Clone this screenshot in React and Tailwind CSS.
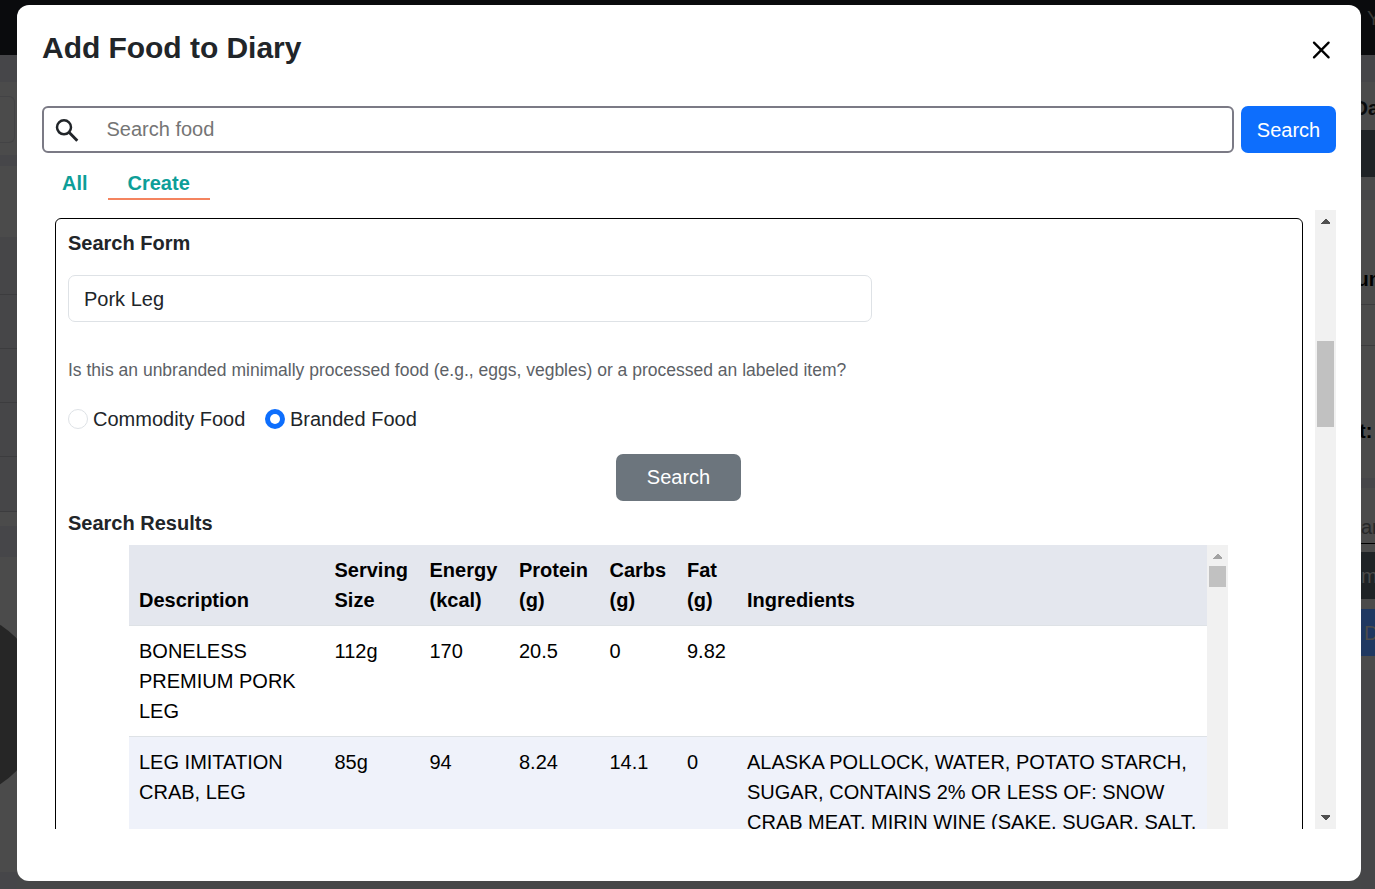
import React from "react";

const COLS = "grid grid-cols-[195.5px_95px_89.5px_90.5px_77.5px_60px_470px]";

const rows = [
  {
    description: ["BONELESS", "PREMIUM PORK", "LEG"],
    values: ["112g", "170", "20.5", "0", "9.82"],
    ingredients: [],
    tone: "bg-white",
  },
  {
    description: ["LEG IMITATION", "CRAB, LEG"],
    values: ["85g", "94", "8.24", "14.1", "0"],
    ingredients: [
      "ALASKA POLLOCK, WATER, POTATO STARCH,",
      "SUGAR, CONTAINS 2% OR LESS OF: SNOW",
      "CRAB MEAT, MIRIN WINE (SAKE, SUGAR, SALT,",
    ],
    tone: "bg-[#eff2fa]",
  },
];

const headers = [
  ["Description"],
  ["Serving", "Size"],
  ["Energy", "(kcal)"],
  ["Protein", "(g)"],
  ["Carbs", "(g)"],
  ["Fat", "(g)"],
  ["Ingredients"],
];

function Lines({ items }) {
  return items.map((t) => (
    <div key={t} className="whitespace-nowrap">
      {t}
    </div>
  ));
}

function Arrow({ down, className }) {
  return (
    <svg width="9" height="5" viewBox="0 0 9 5" className={className} shapeRendering="crispEdges">
      <path d={down ? "M0 0h9v1L5 5H4L0 1z" : "M0 5h9V4L5 0H4L0 4z"} fill="currentColor" />
    </svg>
  );
}

function PageLeft() {
  return (
    <div className="w-[17px] overflow-hidden flex flex-col bg-[#4b4b4b]">
      <div className="h-[55px] shrink-0 bg-[#0a0b0d]" />
      <div className="h-[27px] shrink-0 bg-[#464649]" />
      <div className="h-[73px] shrink-0 pt-[14px]">
        <div className="h-[47px] w-[15px] rounded-r-md border border-l-0 border-[#434345]" />
      </div>
      <div className="h-[11px] shrink-0 bg-[#464649]" />
      <div className="h-[71px] shrink-0" />
      <div className="h-[58px] shrink-0 bg-[#464648] border-b border-[#3c3c3e]" />
      <div className="h-[54px] shrink-0 bg-[#464648] border-b border-[#3c3c3e]" />
      <div className="h-[54px] shrink-0 bg-[#464648] border-b border-[#3c3c3e]" />
      <div className="h-[54px] shrink-0 bg-[#464648] border-b border-[#3c3c3e]" />
      <div className="h-[55px] shrink-0 bg-[#464648] border-b border-[#3c3c3e]" />
      <div className="h-[14px] shrink-0" />
      <div className="h-[31px] shrink-0 bg-[#464649]" />
      <svg width="17" height="315" viewBox="0 557 17 315" className="shrink-0">
        <circle cx="-51.6" cy="704.5" r="95" fill="#262626" />
      </svg>
      <div className="grow bg-[#464649]" />
    </div>
  );
}

function PageRight() {
  return (
    <div className="w-[14px] overflow-hidden flex flex-col bg-[#4b4b4b] text-[20px] whitespace-nowrap">
      <div className="h-[55px] shrink-0 bg-[#0a0b0d] text-[#3a3a37] pl-[6px] pt-[3px] leading-[30px]">Y</div>
      <div className="h-[27px] shrink-0 bg-[#464649]" />
      <div className="h-[48px] shrink-0 pt-[11px] leading-[30px] font-bold text-[#0a0b0c]">
        <div className="-ml-[7.5px]">Da</div>
      </div>
      <div className="h-[47px] shrink-0 bg-[#1f2326]" />
      <div className="h-[13px] shrink-0" />
      <div className="h-[10px] shrink-0 bg-[#464649]" />
      <div className="h-[105px] shrink-0 pt-[64px] leading-[30px] font-bold text-black border-b border-[#3c3c3e]">
        <div className="-ml-[4.5px]">un</div>
      </div>
      <div className="h-[41px] shrink-0 border-b border-[#3c3c3e]" />
      <div className="h-[132px] shrink-0 pt-[70px] leading-[30px] font-bold text-black">
        <div className="-ml-[2px]">t:</div>
      </div>
      <div className="h-[10px] shrink-0 bg-[#464649]" />
      <div className="h-[56px] shrink-0 pt-[24px] leading-[30px] text-[#262728] border-b border-black">ar</div>
      <div className="h-[8px] shrink-0" />
      <div className="h-[47px] shrink-0 bg-[#1f2326] text-[#4b4b4b] pt-[9px] leading-[30px]">m</div>
      <div className="h-[10px] shrink-0" />
      <div className="h-[47px] shrink-0 bg-[#1f3861] text-[#4b4b4b] pt-[9px] pl-[3px] leading-[30px]">D</div>
      <div className="h-[14px] shrink-0" />
      <div className="grow bg-[#464648]" />
    </div>
  );
}

function ResultsTable() {
  return (
    <div className="ml-[61px] flex h-[284px] w-[1099px] overflow-hidden text-black">
      <div className="w-[1078px] shrink-0 overflow-hidden">
        <div className={`${COLS} h-[81px] items-end border-b border-[#dee2e6] bg-[#e4e7ee] pb-[10px] font-bold`}>
          {headers.map((h) => (
            <div key={h[0]} className="pl-[10px]">
              <Lines items={h} />
            </div>
          ))}
        </div>
        {rows.map((r) => (
          <div key={r.description[0]} className={`${COLS} ${r.tone} min-h-[111px] border-b border-[#dee2e6] pt-[10px]`}>
            <div className="pl-[10px]">
              <Lines items={r.description} />
            </div>
            {r.values.map((v, i) => (
              <div key={i} className="pl-[10px]">
                {v}
              </div>
            ))}
            <div className="pl-[10px]">
              <Lines items={r.ingredients} />
            </div>
          </div>
        ))}
      </div>
      <div className="flex w-[21px] flex-col bg-[#f1f1f1] pt-[9px]">
        <Arrow className="ml-[6px] text-[#a3a3a3]" />
        <div className="ml-[2px] mt-[7px] h-[21px] w-[17px] bg-[#c1c1c1]" />
      </div>
    </div>
  );
}

export default function App() {
  return (
    <div className="relative h-[889px] w-[1375px] overflow-hidden bg-[#4a4b4b] font-['Liberation_Sans',Arial,sans-serif] text-[20px] leading-[30px] text-[#212529]">
      <div className="flex h-full">
        <PageLeft />
        <div className="flex flex-1 flex-col bg-[#464748]">
          <div className="h-[55px] bg-[#0a0b0d]" />
        </div>
        <PageRight />
      </div>

      <div className="absolute left-[17px] top-[5px] flex h-[876px] w-[1344px] flex-col rounded-[12px] bg-white px-[25px]">
        <div className="flex h-[101px] justify-between">
          <h1 className="pt-[25px] text-[30px] font-bold leading-[36px] tracking-[-0.04px]">Add Food to Diary</h1>
          <svg width="20" height="20" viewBox="0 0 20 20" className="mr-[5px] mt-[35px] text-black">
            <path d="M3 2.6l14.6 14.8M17.6 2.6L3 17.4" stroke="currentColor" strokeWidth="2.3" strokeLinecap="round" />
          </svg>
        </div>

        <div className="flex h-[47px] gap-[7px]">
          <div className="flex flex-1 items-center rounded-[6px] border-2 border-[#7b7a85] pl-[7.5px]">
            <svg width="30" height="30" viewBox="0 0 30 30" className="shrink-0" fill="none" stroke="currentColor">
              <circle cx="12" cy="12.3" r="7" strokeWidth="2.5" />
              <path d="M17 17.3l8.3 8.5" strokeWidth="2.9" />
            </svg>
            <span className="pb-[2px] pl-[25px] text-[#757575]">Search food</span>
          </div>
          <button className="w-[95px] rounded-[7px] bg-[#0d6efd] text-white">Search</button>
        </div>

        <div className="flex h-[57px] pt-[15px] font-bold text-[#0d9e98]">
          <div className="w-[66px] pl-[20px]">All</div>
          <div className="h-[32px] w-[102px] border-b-2 border-[#f4845f] pl-[19.5px]">Create</div>
        </div>

        <div className="flex h-[619px] pl-[13px]">
          <div className="h-full w-[1248px] overflow-hidden pt-[8px]">
            <div className="h-[640px] rounded-[6px] border border-black px-[12px] pt-[9px]">
              <h2 className="font-bold">Search Form</h2>
              <div className="mt-[17px] h-[47px] w-[804px] rounded-[7px] border border-[#dee2e6] pl-[15px] pt-[8px]">
                Pork Leg
              </div>
              <p className="mt-[33px] whitespace-nowrap text-[17.5px] text-[#5c6166]">
                Is this an unbranded minimally processed food (e.g., eggs, vegbles) or a processed an labeled item?
              </p>
              <div className="mt-[19px] flex items-center">
                <span className="h-5 w-5 rounded-full border border-[#dee2e6]" />
                <span className="ml-[5px] w-[172px]">Commodity Food</span>
                <span className="flex h-5 w-5 items-center justify-center rounded-full bg-[#0d6efd]">
                  <span className="h-[9.5px] w-[9.5px] rounded-full bg-white" />
                </span>
                <span className="ml-[5px]">Branded Food</span>
              </div>
              <button className="ml-[548px] mt-[20px] block h-[47px] w-[125px] rounded-[7px] bg-[#6c757d] pb-px text-white">
                Search
              </button>
              <h2 className="mt-[7px] pb-[7px] font-bold">Search Results</h2>
              <ResultsTable />
            </div>
          </div>
          <div className="ml-[12px] flex w-[21px] flex-col bg-[#f1f1f1] pt-[9px]">
            <Arrow className="ml-[6px] text-[#505050]" />
            <div className="ml-[2px] mt-[117px] h-[86px] w-[17px] bg-[#c1c1c1]" />
            <Arrow down className="mb-[9px] ml-[6px] mt-auto text-[#505050]" />
          </div>
        </div>
      </div>
    </div>
  );
}
